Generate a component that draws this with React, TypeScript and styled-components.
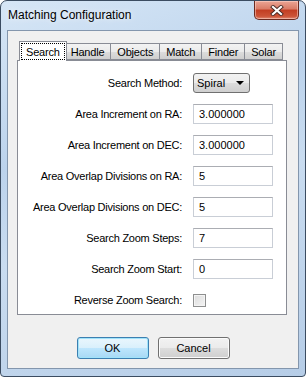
import React from 'react'
import styled, { createGlobalStyle } from 'styled-components'

const GlobalStyle = createGlobalStyle`
  html, body {
    margin: 0;
    padding: 0;
    background: #ffffff;
  }
`

const Window = styled.div`
  box-sizing: border-box;
  width: 306px;
  height: 377px;
  display: flex;
  flex-direction: column;
  border: 1px solid #3b4c61;
  border-radius: 7px 7px 4px 4px;
  background: linear-gradient(160deg, #d6e6f6 0%, #bcd3ec 35%, #c9dcf0 55%, #b6cde7 100%);
  font-family: 'Liberation Sans', Arial, sans-serif;
`

const TitleBar = styled.div`
  height: 29px;
  display: flex;
  align-items: flex-start;
  padding-left: 7px;
`

const Title = styled.div`
  margin-top: 7px;
  font-size: 12px;
  color: #000;
  text-shadow: 0 0 6px rgba(255, 255, 255, 0.9);
`

const CloseButton = styled.div`
  margin-left: auto;
  margin-right: 6px;
  width: 45px;
  height: 19px;
  box-sizing: border-box;
  border: 1px solid #6a2a20;
  border-top: none;
  border-radius: 0 0 5px 5px;
  background: linear-gradient(#eba595 0%, #d97b66 45%, #c23d22 50%, #cc5438 85%, #e08a75 100%);
  display: flex;
  align-items: center;
  justify-content: center;
  box-shadow: inset 0 0 0 1px rgba(255, 220, 210, 0.5);
`

const Client = styled.div`
  flex: 1;
  margin: 0 6px 7px 6px;
  border: 1px solid #8396ad;
  background: #f0f0f0;
  display: flex;
  flex-direction: column;
`

const TabArea = styled.div`
  padding: 10px 11px 0 9px;
`

const TabStrip = styled.div`
  display: flex;
  align-items: flex-end;
  padding-left: 4px;
  height: 19px;
  position: relative;
  z-index: 1;
`

const Tab = styled.div<{ $active?: boolean }>`
  box-sizing: border-box;
  height: ${p => (p.$active ? '20px' : '17px')};
  margin: ${p => (p.$active ? '0 -2px -1px -2px' : '0')};
  padding: ${p => (p.$active ? '1px' : '0 6px')};
  border: 1px solid #898c95;
  border-bottom: ${p => (p.$active ? 'none' : '1px solid #898c95')};
  border-left-width: ${p => (p.$active ? '1px' : '0')};
  background: ${p => (p.$active ? '#ffffff' : 'linear-gradient(#f3f3f3 0%, #ebebeb 50%, #dddddd 51%, #cfcfcf 100%)')};
  font-size: 11px;
  letter-spacing: -0.2px;
  color: #000;
  display: flex;
  align-items: center;
  position: relative;
  z-index: ${p => (p.$active ? 2 : 1)};

  &:first-child {
    border-left-width: 1px;
  }
`

const FocusLabel = styled.span`
  height: 100%;
  box-sizing: border-box;
  padding: 0 5px;
  outline: 1px dotted #000;
  outline-offset: -1px;
  display: flex;
  align-items: center;
`

const Panel = styled.div`
  box-sizing: border-box;
  height: 255px;
  background: #ffffff;
  border: 1px solid #898c95;
  padding: 12px 13px 0 0;
  display: grid;
  grid-template-columns: 1fr 80px;
  grid-auto-rows: 20px;
  column-gap: 11px;
  row-gap: 11px;
  align-items: center;
`

const Label = styled.div`
  font-size: 11px;
  letter-spacing: -0.25px;
  color: #000;
  text-align: right;
  white-space: nowrap;
`

const Field = styled.div`
  box-sizing: border-box;
  height: 20px;
  width: 100%;
  border: 1px solid #c9ced6;
  border-top-color: #abadb3;
  background: #ffffff;
  padding-left: 5px;
  font-size: 11px;
  color: #000;
  display: flex;
  align-items: center;
`

const Select = styled.div`
  box-sizing: border-box;
  width: 57px;
  height: 20px;
  border: 1px solid #707070;
  border-radius: 3px;
  background: linear-gradient(#f2f2f2 0%, #ebebeb 50%, #dddddd 51%, #cfcfcf 100%);
  padding: 0 5px 0 3px;
  font-size: 11px;
  color: #000;
  display: flex;
  align-items: center;
  justify-content: space-between;
`

const Arrow = styled.span`
  width: 0;
  height: 0;
  border-left: 4px solid transparent;
  border-right: 4px solid transparent;
  border-top: 4px solid #000;
`

const CheckBox = styled.div`
  box-sizing: border-box;
  width: 13px;
  height: 13px;
  border: 1px solid #8e8f8f;
  background: linear-gradient(135deg, #dcdcdc 0%, #f4f4f4 100%);
  box-shadow: inset 0 0 0 1px #f4f4f4;
`

const ButtonRow = styled.div`
  display: flex;
  justify-content: center;
  gap: 9px;
  padding-top: 22px;
`

const Button = styled.div<{ $default?: boolean }>`
  box-sizing: border-box;
  width: 72px;
  height: 22px;
  border: 1px solid ${p => (p.$default ? '#3c7fb1' : '#707070')};
  border-radius: 3px;
  background: ${p =>
    p.$default
      ? 'linear-gradient(#eaf6fd 0%, #d9f0fc 50%, #bee6fd 51%, #a7d9f5 100%)'
      : 'linear-gradient(#f2f2f2 0%, #ebebeb 50%, #dddddd 51%, #cfcfcf 100%)'};
  box-shadow: inset 0 0 0 1px ${p => (p.$default ? '#a0e3fa' : '#fbfbfb')};
  font-size: 11px;
  color: #000;
  display: flex;
  align-items: center;
  justify-content: center;
`

const tabs = ['Search', 'Handle', 'Objects', 'Match', 'Finder', 'Solar']

const fields: { label: string; value: string }[] = [
  { label: 'Area Increment on RA:', value: '3.000000' },
  { label: 'Area Increment on DEC:', value: '3.000000' },
  { label: 'Area Overlap Divisions on RA:', value: '5' },
  { label: 'Area Overlap Divisions on DEC:', value: '5' },
  { label: 'Search Zoom Steps:', value: '7' },
  { label: 'Search Zoom Start:', value: '0' },
]

const App: React.FC = () => {
  return (
    <>
      <GlobalStyle />
      <Window>
        <TitleBar>
          <Title>Matching Configuration</Title>
          <CloseButton>
            <svg width="14" height="11" viewBox="0 0 14 11">
              <path d="M3 2 L11 9 M11 2 L3 9" stroke="#4a2a25" strokeWidth="4" strokeLinecap="square" />
              <path d="M3 2 L11 9 M11 2 L3 9" stroke="#ffffff" strokeWidth="2.2" strokeLinecap="square" />
            </svg>
          </CloseButton>
        </TitleBar>
        <Client>
          <TabArea>
            <TabStrip>
              {tabs.map((t, i) =>
                i === 0 ? (
                  <Tab key={t} $active>
                    <FocusLabel>{t}</FocusLabel>
                  </Tab>
                ) : (
                  <Tab key={t}>{t}</Tab>
                )
              )}
            </TabStrip>
            <Panel>
              <Label>Search Method:</Label>
              <Select>
                Spiral
                <Arrow />
              </Select>
              {fields.map(f => (
                <React.Fragment key={f.label}>
                  <Label>{f.label}</Label>
                  <Field>{f.value}</Field>
                </React.Fragment>
              ))}
              <Label>Reverse Zoom Search:</Label>
              <CheckBox />
            </Panel>
          </TabArea>
          <ButtonRow>
            <Button $default>OK</Button>
            <Button>Cancel</Button>
          </ButtonRow>
        </Client>
      </Window>
    </>
  )
}

export default App
